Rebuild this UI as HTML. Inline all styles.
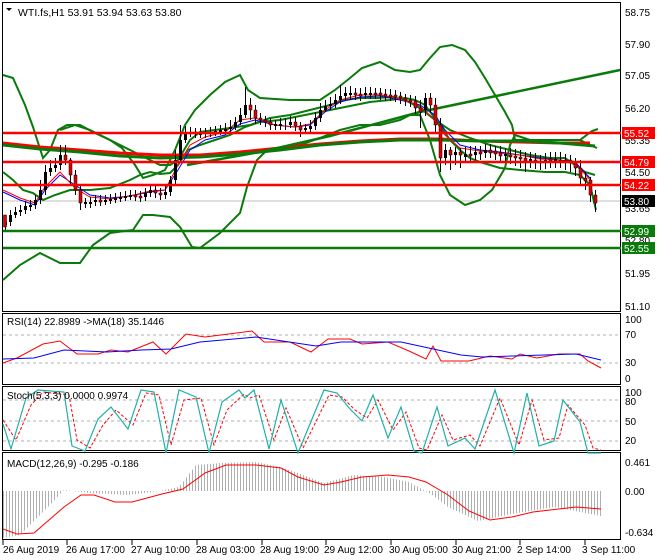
<!DOCTYPE html>
<html><head><meta charset="utf-8"><style>
html,body{margin:0;padding:0;background:#fff;}
svg{display:block;font-family:"Liberation Sans",sans-serif;}
</style></head><body>
<svg width="660" height="560" viewBox="0 0 660 560" xmlns="http://www.w3.org/2000/svg">
<defs>
<pattern id="hist" width="3" height="4" patternUnits="userSpaceOnUse"><rect x="0" y="0" width="1" height="4" fill="#b0b0b0"/></pattern>
</defs>
<rect width="660" height="560" fill="#fff"/>
<g fill="none" stroke="#000" stroke-width="1">
<rect x="2.5" y="2.5" width="618" height="309"/>
<rect x="2.5" y="313.5" width="618" height="71"/>
<rect x="2.5" y="386.5" width="618" height="64"/>
<rect x="2.5" y="452.5" width="618" height="87"/>
</g>
<text x="18" y="16" font-size="10.5">WTI.fs,H1  53.91 53.94 53.63 53.80</text>
<path d="M6 8 L12 8 L9 11 Z" fill="#000"/>
<line x1="3" y1="201" x2="620" y2="201" stroke="#c0c0c0"/>
<g fill="none" stroke="#0a7a0a" stroke-width="2">
<polyline points="3,75 13,78 25,105 33,127 43,158 50,150 58,130 67,125 80,125 95,133 110,140 122,148 135,165 143,178 153,175 165,170 175,150 185,125 195,110 210,95 225,82 240,75 248,90 260,98 290,100 320,100 335,90 350,78 362,68 380,62 395,70 410,72 420,70 430,58 440,47 452,45 465,50 475,62 485,78 495,95 505,112 512,125 515,140 525,140 560,140 580,140 592,131 598,129"/>
<polyline points="3,280 20,265 40,253 60,263 80,263 93,245 110,233 133,230 143,215 153,215 170,217 180,227 192,247 200,248 220,233 240,213 247,187 257,160 267,150 280,148 300,145 320,138 340,130 360,125 380,125 400,120 410,115 420,115 430,140 440,175 450,195 465,205 480,200 492,190 505,168 510,145 515,135 530,140 560,140 580,140 590,145 597,148"/>
<polyline points="3,172 13,180 23,190 33,193 43,200 55,195 70,190 90,190 110,188 130,180 140,175 150,172 160,174 170,173 178,165 188,150 200,145 215,140 230,135 245,127 260,122 280,120 300,116 320,112 340,108 355,105 370,102 390,100 405,98 415,100 425,105 440,125 450,140 460,150 470,158 480,162 490,165 500,168 520,170 545,172 565,172 580,175 590,185 596,210"/>
<polyline points="60,130 75,125 90,130 110,140 130,150 150,160 160,165 170,165 178,160 190,140 200,132 230,128 250,125 270,118 290,115 310,110 330,105 345,100 360,98 378,98 392,97 405,100 420,108 435,120 450,130 470,138 490,145 510,150 530,155 550,158 565,158 575,165 585,172 595,175"/>
</g>
<polyline fill="none" stroke="#ff0000" stroke-width="3" points="3,143 40,147 80,150 120,153 160,155 200,155 240,152 280,148 320,144 360,141 400,139 440,139 480,141 520,142 560,143 590,143"/>
<polyline fill="none" stroke="#0a7a0a" stroke-width="3" points="3,145 40,149 80,152 120,156 160,158 200,157 240,154 280,150 320,145 360,142 400,140 440,140 480,141 520,141 560,143 595,146"/>
<polyline fill="none" stroke="#0a7a0a" stroke-width="2.5" points="187,165 260,152 330,136 420,112 620,70"/>
<polyline fill="none" stroke="#0000ff" stroke-width="1" points="3,192 20,200 35,205 45,190 60,175 75,185 90,195 110,198 130,196 150,192 165,190 178,170 190,150 205,140 225,135 240,124 255,120 275,125 295,127 310,125 325,112 340,102 360,97 380,96 400,100 420,105 435,115 445,130 460,145 480,150 500,152 520,155 540,158 560,160 575,162 590,178"/>
<polyline fill="none" stroke="#ff0000" stroke-width="1" points="3,190 20,198 35,203 45,187 60,172 75,188 90,197 110,199 130,196 150,191 165,190 178,165 190,145 205,137 225,132 240,120 255,118 275,125 295,127 310,124 325,110 340,100 360,95 380,95 400,99 420,106 435,120 445,135 460,148 480,151 500,153 520,155 540,159 560,160 575,163 592,182"/>
<!-- candles -->
<path fill="none" stroke="#000" stroke-width="1" d="M5.5 217V230M10.5 210V226M15.5 207V218M20.5 205V216M25.5 201V214M30.5 200V211M35.5 195V209M40.5 180V204M45.5 165V195M50.5 160V176M55.5 158V172M60.5 145V170M65.5 145V165M70.5 158V185M75.5 170V195M80.5 186V210M85.5 198V208M90.5 197V208M95.5 195V206M100.5 195V206M105.5 195V205M110.5 194V204M115.5 193V203M120.5 192V202M125.5 191V201M130.5 190V200M135.5 190V201M140.5 191V202M145.5 188V201M150.5 184V197M155.5 186V198M160.5 188V200M165.5 186V199M170.5 176V196M175.5 150V185M180.5 125V163M185.5 126V143M190.5 127V137M195.5 128V138M200.5 128V138M205.5 128V138M210.5 127V137M215.5 126V136M220.5 125V135M225.5 123V134M230.5 120V132M235.5 117V130M240.5 108V125M245.5 87V118M250.5 98V120M255.5 105V124M260.5 113V125M265.5 116V127M270.5 118V130M275.5 120V130M280.5 118V130M285.5 118V130M290.5 116V128M295.5 117V131M300.5 122V137M305.5 124V134M310.5 120V133M315.5 112V130M320.5 103V122M325.5 100V112M330.5 97V110M335.5 94V108M340.5 85V104M345.5 87V100M350.5 86V100M355.5 88V100M360.5 88V101M365.5 87V99M370.5 87V99M375.5 88V99M380.5 88V100M385.5 89V101M390.5 89V101M395.5 90V102M400.5 92V104M405.5 94V106M410.5 95V107M415.5 96V114M420.5 100V128M425.5 93V116M430.5 93V112M435.5 98V132M440.5 118V172M445.5 144V165M450.5 147V170M455.5 147V165M460.5 148V168M465.5 147V162M470.5 146V162M475.5 146V160M480.5 146V160M485.5 144V158M490.5 144V158M495.5 146V160M500.5 146V163M505.5 148V163M510.5 148V164M515.5 149V166M520.5 150V168M525.5 152V172M530.5 152V168M535.5 153V169M540.5 155V170M545.5 153V169M550.5 152V168M555.5 152V168M560.5 152V168M565.5 154V170M570.5 155V172M575.5 158V176M580.5 160V186M585.5 172V190M590.5 177V202M595.5 190V212"/>
<path fill="#000" d="M4 222h3v3h-3zM9 215h3v7h-3zM14 212h3v3h-3zM19 210h3v2h-3zM24 206h3v4h-3zM29 205h3v2h-3zM34 200h3v5h-3zM39 190h3v10h-3zM44 172h3v18h-3zM49 168h3v4h-3zM54 165h3v3h-3zM59 155h3v10h-3zM84 202h3v2h-3zM89 202h3v2h-3zM94 200h3v2h-3zM104 200h3v2h-3zM109 199h3v2h-3zM114 198h3v2h-3zM119 197h3v2h-3zM124 196h3v2h-3zM129 195h3v2h-3zM144 193h3v4h-3zM149 190h3v3h-3zM164 192h3v3h-3zM169 180h3v12h-3zM174 160h3v20h-3zM179 140h3v20h-3zM184 133h3v7h-3zM189 132h3v2h-3zM199 133h3v2h-3zM204 132h3v2h-3zM209 132h3v2h-3zM214 131h3v2h-3zM219 130h3v2h-3zM224 129h3v2h-3zM229 127h3v2h-3zM234 122h3v5h-3zM239 115h3v7h-3zM244 105h3v10h-3zM274 124h3v2h-3zM279 124h3v2h-3zM289 122h3v3h-3zM304 128h3v2h-3zM309 126h3v3h-3zM314 118h3v8h-3zM319 110h3v8h-3zM324 106h3v4h-3zM329 104h3v2h-3zM334 100h3v4h-3zM339 96h3v4h-3zM344 93h3v3h-3zM349 93h3v2h-3zM364 93h3v2h-3zM369 93h3v2h-3zM424 98h3v12h-3zM444 150h3v8h-3zM454 152h3v3h-3zM464 154h3v3h-3zM474 152h3v3h-3zM484 150h3v3h-3zM504 154h3v2h-3zM529 159h3v2h-3zM544 160h3v2h-3zM554 159h3v2h-3z"/>
<path fill="#e00000" stroke="#000" stroke-width="0.5" d="M3.5 215h3v12h-3zM64 155h3v5h-3zM69 160h3v15h-3zM74 175h3v15h-3zM79 190h3v13h-3zM99 200h3v2h-3zM134 195h3v2h-3zM139 196h3v2h-3zM154 190h3v3h-3zM159 193h3v2h-3zM194 132h3v2h-3zM249 105h3v5h-3zM254 110h3v8h-3zM259 118h3v2h-3zM264 120h3v2h-3zM269 122h3v3h-3zM294 122h3v4h-3zM299 126h3v4h-3zM354 93h3v2h-3zM359 94h3v2h-3zM374 93h3v2h-3zM379 93h3v2h-3zM384 94h3v2h-3zM389 95h3v2h-3zM394 95h3v2h-3zM399 96h3v2h-3zM404 98h3v2h-3zM409 100h3v2h-3zM414 101h3v7h-3zM419 108h3v4h-3zM429 98h3v7h-3zM434 105h3v20h-3zM439 125h3v33h-3zM449 150h3v5h-3zM459 152h3v3h-3zM469 154h3v2h-3zM479 152h3v2h-3zM489 150h3v3h-3zM494 151h3v3h-3zM499 153h3v3h-3zM509 155h3v2h-3zM514 156h3v2h-3zM519 157h3v2h-3zM524 158h3v3h-3zM534 160h3v2h-3zM539 161h3v2h-3zM549 159h3v2h-3zM559 160h3v2h-3zM564 160h3v2h-3zM569 160h3v3h-3zM574 163h3v5h-3zM579 168h3v10h-3zM584 178h3v3h-3zM589 180h3v15h-3zM594 195h3v8h-3z"/>
<g stroke-width="2.5">
<line x1="3" y1="133" x2="621" y2="133" stroke="#ff0000"/>
<line x1="3" y1="162" x2="621" y2="162" stroke="#ff0000"/>
<line x1="3" y1="185" x2="621" y2="185" stroke="#ff0000"/>
<line x1="3" y1="231" x2="621" y2="231" stroke="#0a7a0a"/>
<line x1="3" y1="248" x2="621" y2="248" stroke="#0a7a0a"/>
</g>
<g font-size="10" fill="#000">
<text x="625" y="16">58.75</text><text x="625" y="48">57.90</text><text x="625" y="79">57.05</text><text x="625" y="112">56.20</text><text x="625" y="144">55.35</text><text x="625" y="176">54.50</text><text x="625" y="212">53.65</text><text x="625" y="244">52.80</text><text x="625" y="277">51.95</text><text x="625" y="310">51.10</text>
</g>
<g font-size="10">
<rect x="622" y="127" width="33" height="12" fill="#ff0000"/><text x="624" y="137" fill="#fff">55.52</text>
<rect x="622" y="156" width="33" height="12" fill="#ff0000"/><text x="624" y="166" fill="#fff">54.79</text>
<rect x="622" y="179" width="33" height="12" fill="#ff0000"/><text x="624" y="189" fill="#fff">54.22</text>
<rect x="622" y="195" width="33" height="12" fill="#000"/><text x="624" y="205" fill="#fff">53.80</text>
<rect x="622" y="225" width="33" height="12" fill="#0a7a0a"/><text x="624" y="235" fill="#fff">52.99</text>
<rect x="622" y="242" width="33" height="12" fill="#0a7a0a"/><text x="624" y="252" fill="#fff">52.55</text>
</g>
<g stroke="#b0b0b0" stroke-dasharray="3,3"><line x1="3" y1="335" x2="620" y2="335"/><line x1="3" y1="363" x2="620" y2="363"/></g>
<text x="7" y="325" font-size="10">RSI(14) 22.8989  -&gt;MA(18) 35.1446</text>
<polyline fill="none" stroke="#ff0000" stroke-width="1" points="3,363 17,358 43,344 60,341 77,354 98,354 111,350 128,352 153,342 166,354 186,334 205,337 252,331 264,342 290,342 311,352 328,339 350,339 362,344 388,342 409,351 426,359 433,346 441,361 469,361 490,356 512,359 520,354 537,358 559,354 580,354 588,361 601,368"/>
<polyline fill="none" stroke="#0000ff" stroke-width="1" points="3,359 34,358 64,350 107,352 141,350 171,349 200,342 256,337 316,346 341,342 401,342 461,355 482,357 576,354 601,360"/>
<g font-size="10"><text x="625" y="323">100</text><text x="625" y="338">70</text><text x="625" y="366">30</text><text x="625" y="382">0</text></g>
<g stroke="#b0b0b0" stroke-dasharray="3,3"><line x1="3" y1="400" x2="620" y2="400"/><line x1="3" y1="421" x2="620" y2="421"/><line x1="3" y1="441" x2="620" y2="441"/></g>
<polyline fill="none" stroke="#ff0000" stroke-dasharray="3,2" points="3,420 16,440 31,405 43,392 69,395 77,440 90,448 103,425 116,410 133,425 146,393 159,395 171,445 184,400 201,398 214,445 227,410 244,394 250,398 259,395 274,440 286,408 303,448 329,395 342,397 355,410 367,418 378,400 393,430 406,412 419,448 427,450 442,415 453,440 470,435 480,446 500,398 519,445 532,400 544,440 559,438 568,405 585,425 593,448 601,450"/>
<polyline fill="none" stroke="#20b0a8" stroke-width="1.2" points="3,424 11,449 26,398 38,390 64,392 72,446 85,451 98,419 111,407 128,429 141,390 154,392 166,453 179,390 196,397 209,453 222,402 239,390 245,398 254,390 269,449 281,400 298,453 324,390 337,393 350,409 362,421 373,395 388,438 401,407 414,451 422,453 437,407 448,446 465,438 475,449 495,390 514,453 527,393 539,446 554,441 563,400 580,422 588,453 601,453"/>
<text x="7" y="399" font-size="10">Stoch(5,3,3) 0.0000 0.9974</text>
<g font-size="10"><text x="625" y="396">100</text><text x="625" y="405">80</text><text x="625" y="425">50</text><text x="625" y="444">20</text></g>
<polygon fill="url(#hist)" points="3,491 3,538 20,535 34,521 50,505 64,490 90,493 128,495 160,491 179,487 196,465 222,463 256,462 280,467 298,473 324,483 354,475 384,477 409,482 431,494 448,507 478,521 512,514 554,507 601,516 601,491"/>
<polyline fill="none" stroke="#ff0000" stroke-width="1" points="3,529 17,534 34,533 64,507 81,495 94,495 115,502 132,502 162,494 183,489 205,473 226,465 256,465 281,468 298,477 324,485 341,482 362,477 388,475 409,477 426,482 448,495 469,511 490,520 512,517 533,512 576,507 601,509"/>
<text x="7" y="467" font-size="10">MACD(12,26,9) -0.295 -0.186</text>
<g font-size="10"><text x="625" y="466">0.461</text><text x="625" y="495">0.00</text><text x="625" y="536">-0.634</text></g>
<g stroke="#000"><line x1="3" y1="540" x2="3" y2="545"/><line x1="67" y1="540" x2="67" y2="545"/><line x1="132" y1="540" x2="132" y2="545"/><line x1="197" y1="540" x2="197" y2="545"/><line x1="262" y1="540" x2="262" y2="545"/><line x1="326" y1="540" x2="326" y2="545"/><line x1="391" y1="540" x2="391" y2="545"/><line x1="456" y1="540" x2="456" y2="545"/><line x1="520" y1="540" x2="520" y2="545"/><line x1="585" y1="540" x2="585" y2="545"/></g>
<g font-size="10">
<text x="3" y="553">26 Aug 2019</text><text x="66" y="553">26 Aug 17:00</text><text x="131" y="553">27 Aug 10:00</text><text x="196" y="553">28 Aug 03:00</text><text x="260" y="553">28 Aug 19:00</text><text x="324" y="553">29 Aug 12:00</text><text x="389" y="553">30 Aug 05:00</text><text x="452" y="553">30 Aug 21:00</text><text x="517" y="553">2 Sep 14:00</text><text x="582" y="553">3 Sep 11:00</text>
</g>
</svg>
</body></html>
